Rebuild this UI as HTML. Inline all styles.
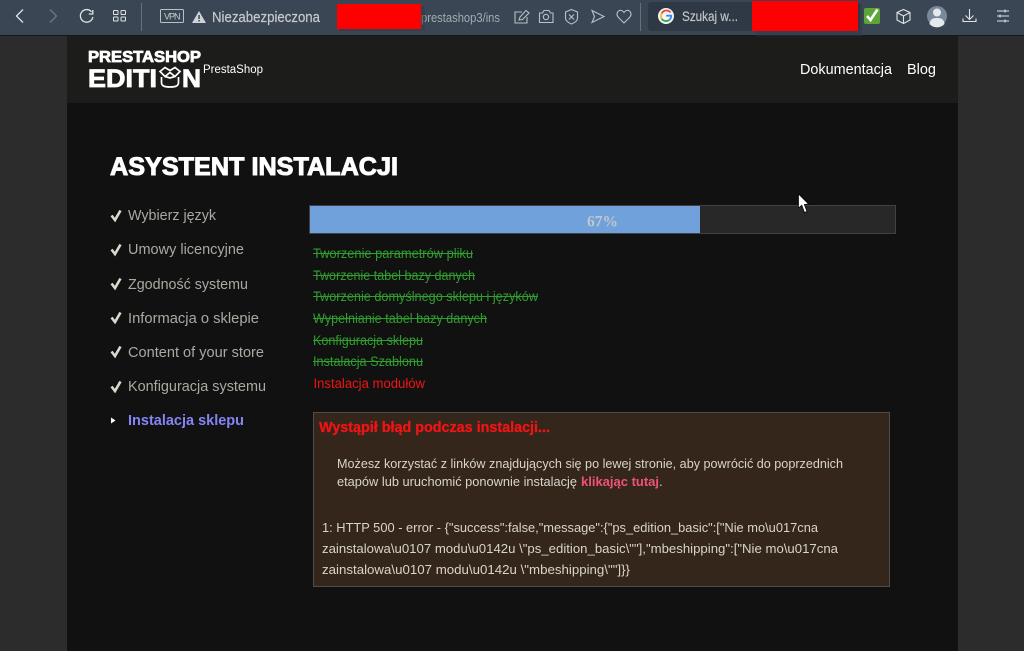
<!DOCTYPE html>
<html lang="pl">
<head>
<meta charset="utf-8">
<title>Asystent instalacji</title>
<style>
html,body{margin:0;padding:0;background:#2b2c2b;width:1024px;height:651px;overflow:hidden}
svg{display:block;position:absolute;left:0;top:0}
text{font-family:"Liberation Sans",sans-serif}
.st{font-size:14.5px;fill:#a9aaa2}
.ck{fill:none;stroke:#d3dccf;stroke-width:2.6}
.li{font-size:13.5px;fill:#2f9e2f}
.sl{fill:#2f9e2f}
.bd{font-size:13px;fill:#d8d4cc}
.ic{fill:none;stroke:#b9c0c6;stroke-width:1.1}
.ic2{fill:none;stroke:#dfe3e6;stroke-width:1.1}
</style>
</head>
<body>
<svg width="1024" height="651" viewBox="0 0 1024 651" xmlns="http://www.w3.org/2000/svg">
<rect width="1024" height="651" fill="#2b2c2b"/>
<rect x="67" y="36" width="891" height="615" fill="#111111"/>
<rect x="67" y="36" width="891" height="67" fill="#1c1c1b"/>

<!-- toolbar -->
<rect width="1024" height="35" fill="#3a4654"/>
<rect y="35" width="1024" height="1" fill="#14181c"/>
<path d="M23 9.500 L16.500 16 L23 22.500" fill="none" stroke="#dfe3e6" stroke-width="1.300"/>
<path d="M50 9.500 L56.500 16 L50 22.500" fill="none" stroke="#6d7782" stroke-width="1.300"/>
<path d="M91.500 11.800 A6.300 6.300 0 1 0 92.900 17" fill="none" stroke="#dfe3e6" stroke-width="1.300"/>
<path d="M92.800 10 V14 H88.800" fill="none" stroke="#dfe3e6" stroke-width="1.300"/>
<g fill="none" stroke="#dfe3e6" stroke-width="1">
<rect x="113.500" y="10.500" width="4.500" height="4" rx=".8"/><rect x="121" y="10.500" width="4.500" height="4" rx=".8"/>
<rect x="113.500" y="17" width="4.500" height="4" rx=".8"/><rect x="121" y="17" width="4.500" height="4" rx=".8"/>
</g>
<rect x="141" y="3" width="1" height="28" fill="#67717c"/>
<rect x="160.500" y="9.500" width="23" height="13" rx="1" fill="none" stroke="#b9c0c6"/>
<text x="164" y="19.500" font-size="9" fill="#c5cacf" textLength="16.500" lengthAdjust="spacing">VPN</text>
<path d="M199 11 L206 23 L192 23 Z" fill="#cfd3d6"/>
<rect x="198.300" y="15" width="1.500" height="4" fill="#3a4654"/><rect x="198.300" y="20" width="1.500" height="1.500" fill="#3a4654"/>
<text x="212" y="22" font-size="14.500" fill="#c6cacd" stroke="#c6cacd" stroke-width=".2" textLength="108" lengthAdjust="spacingAndGlyphs">Niezabezpieczona</text>
<text x="421" y="22" font-size="13" fill="#a4abb2" textLength="79" lengthAdjust="spacingAndGlyphs">prestashop3/ins</text>
<rect x="339" y="6" width="86" height="25" fill="#2f3944" opacity=".5"/>
<rect x="337" y="4" width="84" height="25" fill="#ff0000"/>

<!-- address icons -->
<g class="ic">
<path d="M522 12 H515 V23 H527 V17"/><path d="M519 20 L520 17 L526 10.500 L529 13 L522.500 19.500 Z"/>
<path d="M539.500 13 H542.500 L544 10.500 H549 L550.500 13 H553 V22.500 H539.500 Z"/><circle cx="546" cy="17" r="2.700"/>
<path d="M571.500 9.500 L577.500 12 V18 C577.500 21 574 23 571.500 24 C569 23 565.500 21 565.500 18 V12 Z"/><path d="M569 14.500 L574 19.500 M574 14.500 L569 19.500"/>
<path d="M592 10.500 L604 16.500 L592 22.500 L594.500 16.500 Z"/>
<path d="M624 23 L618.500 17.500 C615 13.500 618.500 9.500 621.500 10.500 C623 11 624 12.500 624 12.500 C624 12.500 625 11 626.500 10.500 C629.500 9.500 633 13.500 629.500 17.500 Z"/>
</g>
<rect x="640" y="3" width="1" height="28" fill="#67717c"/>

<!-- search -->
<rect x="648" y="2" width="212" height="29" rx="3" fill="#2e3945"/>
<circle cx="666" cy="16" r="8" fill="#f4f4f4"/>
<path d="M670.500 12.500 A5.200 5.200 0 0 0 661.700 13.500" fill="none" stroke="#e8453c" stroke-width="1.800"/>
<path d="M661.700 13.300 A5.200 5.200 0 0 0 661.700 18.700" fill="none" stroke="#f9bb2d" stroke-width="1.800"/>
<path d="M661.700 18.700 A5.200 5.200 0 0 0 669.800 19.500" fill="none" stroke="#34a853" stroke-width="1.800"/>
<path d="M669.800 19.500 A5.200 5.200 0 0 0 671.200 15.700 H666.200" fill="none" stroke="#4285f4" stroke-width="1.800"/>
<text x="682" y="21" font-size="13.500" fill="#c4c8cb" stroke="#c4c8cb" stroke-width=".15" textLength="56" lengthAdjust="spacingAndGlyphs">Szukaj w...</text>
<rect x="756" y="4" width="106" height="32" fill="#2f3944" opacity=".45"/>
<rect x="752" y="1" width="106" height="30" fill="#ff0000"/>

<!-- right icons -->
<rect x="864" y="8" width="16" height="16" rx="2" fill="#5da538"/>
<path d="M867 16 L870.500 20 L877.500 9.500" fill="none" stroke="#ffffff" stroke-width="2.600"/>
<g class="ic2">
<path d="M903.500 9.500 L910 12.500 V20 L903.500 23.500 L897 20 V12.500 Z"/><path d="M897 12.500 L903.500 16 L910 12.500 M903.500 16 V23.500"/>
</g>
<circle cx="937" cy="16" r="10" fill="#79899b"/>
<circle cx="937" cy="12.500" r="4" fill="#e6e9ec"/>
<path d="M929.500 24 C930 18.500 934 18 937 18 C940 18 944 18.500 944.500 24 A10 10 0 0 1 929.500 24 Z" fill="#e6e9ec"/>
<g class="ic2">
<path d="M969.500 9 V19 M965.500 15.500 L969.500 19.500 L973.500 15.500"/><path d="M963 18.500 V21.500 H976 V18.500"/>
<path d="M997 11 H1009 M997 16 H1009 M997 21 H1009"/><path d="M1005 9.500 V12.500 M1000 14.500 V17.500 M1005 19.500 V22.500"/>
</g>

<!-- logo -->
<text x="88" y="62" font-size="16" font-weight="700" fill="#fff" stroke="#fff" stroke-width=".8" textLength="113" lengthAdjust="spacingAndGlyphs">PRESTASHOP</text>
<text x="88" y="87" font-size="25" font-weight="700" fill="#fff" stroke="#fff" stroke-width=".8" textLength="69" lengthAdjust="spacingAndGlyphs">EDITI</text>
<text x="182" y="87" font-size="25" font-weight="700" fill="#fff" stroke="#fff" stroke-width=".8" textLength="19" lengthAdjust="spacingAndGlyphs">N</text>
<g fill="none" stroke="#fff" stroke-width="1.700">
<path d="M161.500 77 V82.500 C161.500 86 164.500 87 170 87 C175.500 87 178.500 86 178.500 82.500 V77"/>
<path d="M160 71.500 L165 67.500 L170 70.500 L175 67.500 L180 71.500 L175 76.500 L170 72.500 L165 76.500 Z"/>
<path d="M165 76.500 L170 78 L175 76.500"/>
</g>
<text x="203" y="73" font-size="11.500" fill="#fff" textLength="60" lengthAdjust="spacingAndGlyphs">PrestaShop</text>
<text x="800" y="74" font-size="14.500" fill="#fff" textLength="92" lengthAdjust="spacingAndGlyphs">Dokumentacja</text>
<text x="907" y="74" font-size="14.500" fill="#fff" textLength="29" lengthAdjust="spacingAndGlyphs">Blog</text>

<!-- title -->
<text x="110" y="175" font-size="25" font-weight="700" fill="#fff" stroke="#fff" stroke-width="1" textLength="288" lengthAdjust="spacingAndGlyphs">ASYSTENT INSTALACJI</text>

<!-- steps -->
<path class="ck" d="M111.500 215.500 L115 220 L120.500 210.500"/>
<text class="st" x="128" y="220" textLength="88" lengthAdjust="spacingAndGlyphs">Wybierz język</text>
<path class="ck" d="M111.500 249.500 L115 254 L120.500 244.500"/>
<text class="st" x="128" y="254" textLength="116" lengthAdjust="spacingAndGlyphs">Umowy licencyjne</text>
<path class="ck" d="M111.500 283.500 L115 288 L120.500 278.500"/>
<text class="st" x="128" y="289" textLength="120" lengthAdjust="spacingAndGlyphs">Zgodność systemu</text>
<path class="ck" d="M111.500 317.500 L115 322 L120.500 312.500"/>
<text class="st" x="128" y="323" textLength="131" lengthAdjust="spacingAndGlyphs">Informacja o sklepie</text>
<path class="ck" d="M111.500 351.500 L115 356 L120.500 346.500"/>
<text class="st" x="128" y="357" textLength="136" lengthAdjust="spacingAndGlyphs">Content of your store</text>
<path class="ck" d="M111.500 386.500 L115 391 L120.500 381.500"/>
<text class="st" x="128" y="391" textLength="138" lengthAdjust="spacingAndGlyphs">Konfiguracja systemu</text>
<path d="M111 417.500 L115.500 420.500 L111 423.500 Z" fill="#fff"/>
<text x="128" y="425" font-size="14.500" font-weight="700" fill="#8484f4" textLength="116" lengthAdjust="spacingAndGlyphs">Instalacja sklepu</text>

<!-- progress -->
<rect x="309.500" y="205.500" width="586" height="28" fill="#282828" stroke="#414141"/>
<rect x="310" y="206" width="390" height="27" fill="#71a1da"/>
<text x="587" y="226.500" font-size="16" font-weight="700" fill="#c2c6ca" style="font-family:'Liberation Serif',serif" textLength="31" lengthAdjust="spacingAndGlyphs">67%</text>

<!-- list -->
<text class="li" x="313" y="258" textLength="160" lengthAdjust="spacingAndGlyphs">Tworzenie parametrów pliku</text><rect class="sl" x="313" y="253" width="160" height="1"/>
<text class="li" x="313" y="280" textLength="162" lengthAdjust="spacingAndGlyphs">Tworzenie tabel bazy danych</text><rect class="sl" x="313" y="275" width="162" height="1"/>
<text class="li" x="313" y="301" textLength="225" lengthAdjust="spacingAndGlyphs">Tworzenie domyślnego sklepu i języków</text><rect class="sl" x="313" y="296" width="225" height="1"/>
<text class="li" x="313" y="323" textLength="174" lengthAdjust="spacingAndGlyphs">Wypełnianie tabel bazy danych</text><rect class="sl" x="313" y="318" width="174" height="1"/>
<text class="li" x="313" y="345" textLength="110" lengthAdjust="spacingAndGlyphs">Konfiguracja sklepu</text><rect class="sl" x="313" y="340" width="110" height="1"/>
<text class="li" x="313" y="366" textLength="110" lengthAdjust="spacingAndGlyphs">Instalacja Szablonu</text><rect class="sl" x="313" y="361" width="110" height="1"/>
<text x="313.500" y="388" font-size="13.500" fill="#f01414" textLength="111.500" lengthAdjust="spacingAndGlyphs">Instalacja modułów</text>

<!-- error box -->
<rect x="313.500" y="412.500" width="576" height="174" fill="#35261b" stroke="#4d4d4d"/>
<text x="319" y="432" font-size="14.500" font-weight="700" fill="#f01414" stroke="#f01414" stroke-width=".3" textLength="231" lengthAdjust="spacingAndGlyphs">Wystąpił błąd podczas instalacji...</text>
<text class="bd" x="337" y="468" textLength="506" lengthAdjust="spacingAndGlyphs">Możesz korzystać z linków znajdujących się po lewej stronie, aby powrócić do poprzednich</text>
<text class="bd" x="337" y="486" textLength="240" lengthAdjust="spacingAndGlyphs">etapów lub uruchomić ponownie instalację</text>
<text x="581" y="486" font-size="13" font-weight="700" fill="#f0527a" textLength="78" lengthAdjust="spacingAndGlyphs">klikając tutaj</text>
<text class="bd" x="659" y="486">.</text>
<text class="bd" x="322" y="532" textLength="496" lengthAdjust="spacingAndGlyphs">1: HTTP 500 - error - {"success":false,"message":{"ps_edition_basic":["Nie mo\u017cna</text>
<text class="bd" x="322" y="553" textLength="516" lengthAdjust="spacingAndGlyphs">zainstalowa\u0107 modu\u0142u \"ps_edition_basic\""],"mbeshipping":["Nie mo\u017cna</text>
<text class="bd" x="322" y="574" textLength="308" lengthAdjust="spacingAndGlyphs">zainstalowa\u0107 modu\u0142u \"mbeshipping\""]}}</text>

<!-- cursor -->
<path d="M798.500 194 V208 L801.800 205.200 L804.500 212.500 L807 211.500 L804.300 204.500 L808.500 204 Z" fill="#fff" stroke="#000" stroke-width=".7"/>
</svg>
</body>
</html>
